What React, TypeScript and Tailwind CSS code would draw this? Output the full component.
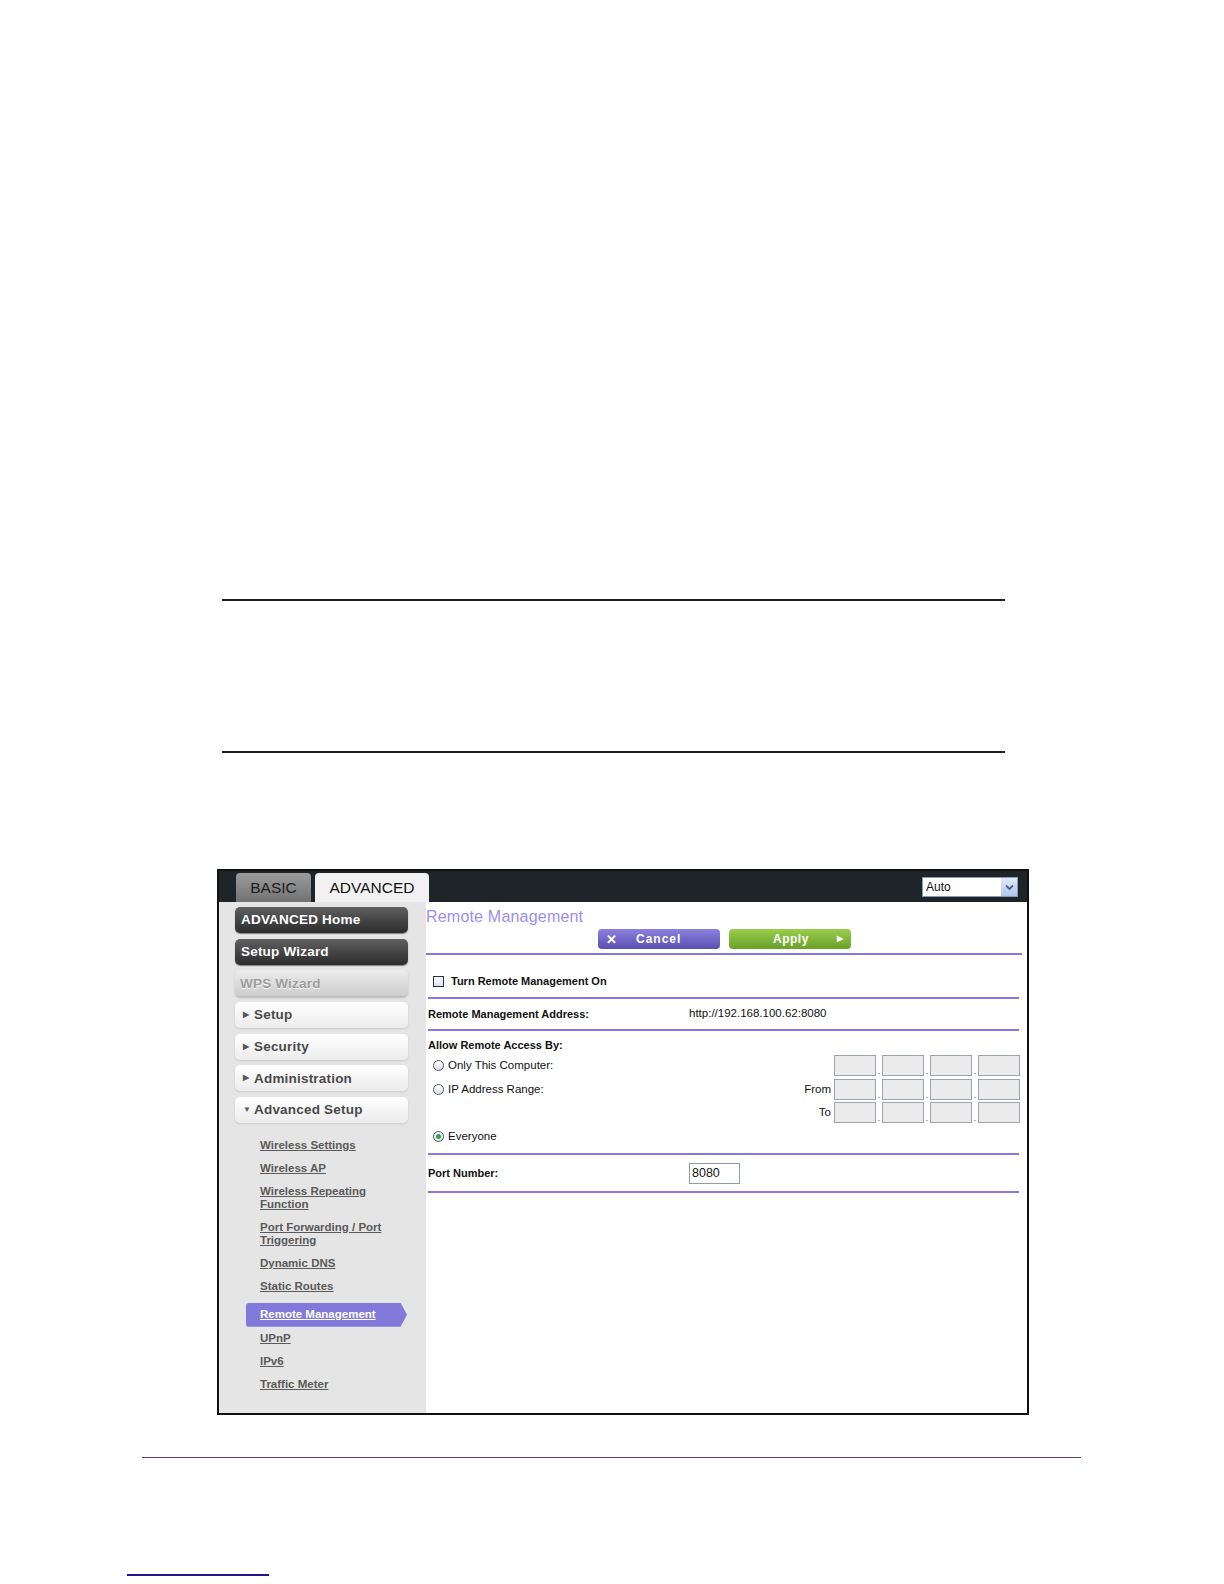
import React from 'react';

const sans = "font-['Liberation_Sans',Arial,Helvetica,sans-serif]";

// Sidebar menu buttons
const NavButton = ({ label, kind, arrow }: { label: string; kind: 'dark' | 'disabled' | 'light'; arrow?: 'right' | 'down' }) => {
    const look =
        kind === 'dark'
            ? 'bg-linear-to-b from-[#616161] to-[#2c2c2c] text-white shadow-[0_1px_1px_rgba(0,0,0,0.45)] pl-[6px]'
            : kind === 'disabled'
              ? 'bg-linear-to-b from-[#ececec] to-[#cdcdcd] text-[#9c9c9c] shadow-[0_2px_2px_rgba(0,0,0,0.18)] pl-[5px] [text-shadow:0_1px_0_#fff]'
              : 'bg-linear-to-b from-[#ffffff] to-[#ececec] text-[#4a4a4a] shadow-[0_1px_2px_rgba(0,0,0,0.12)] pl-[8px]';
    return (
        <div className={`h-[26px] w-[173px] rounded-[5px] flex items-center text-[13.5px] font-bold tracking-[0.2px] ${look}`}>
            {arrow && <span className="w-[11px] text-[8px] text-[#5a5a5a] leading-none">{arrow === 'right' ? '▶' : '▼'}</span>}
            <span className="leading-none">{label}</span>
        </div>
    );
};

const SubLink = ({ lines }: { lines: string[] }) => (
    <div className="pl-[41px] flex flex-col">
        {lines.map((l) => (
            <span key={l} className="text-[11.5px] leading-[13px] font-bold text-[#5a5a5a] underline">
                {l}
            </span>
        ))}
    </div>
);

const Radio = ({ checked }: { checked?: boolean }) => (
    <span className="w-[11px] h-[11px] rounded-full border border-[#4b5a70] bg-linear-to-b from-[#ffffff] to-[#dde2ea] flex items-center justify-center shrink-0">
        {checked && <span className="w-[5px] h-[5px] rounded-full bg-[#2fa63a]" />}
    </span>
);

const IpBoxes = () => (
    <div className="flex items-end">
        {[0, 1, 2, 3].map((i) => (
            <React.Fragment key={i}>
                {i > 0 && <span className="w-[6px] text-[9px] leading-[10px] text-[#555] text-center">.</span>}
                <span className="w-[42px] h-[21px] bg-[#ebebeb] border border-[#9aa4b4]" />
            </React.Fragment>
        ))}
    </div>
);

const Rule = ({ wide }: { wide?: boolean }) => <div className={`h-[2px] bg-[#8479e1] ${wide ? 'mr-[5px]' : 'ml-[2px] mr-[8px]'}`} />;

const App = () => {
    const links: string[][] = [
        ['Wireless Settings'],
        ['Wireless AP'],
        ['Wireless Repeating', 'Function'],
        ['Port Forwarding / Port', 'Triggering'],
        ['Dynamic DNS'],
        ['Static Routes'],
    ];

    return (
        <div className={`w-[1224px] h-[1584px] bg-white flex flex-col ${sans}`}>
            {/* note box rules */}
            <div className="mt-[599px] ml-[222px] w-[783px] h-[2px] bg-[#231f20]" />
            <div className="mt-[150px] ml-[222px] w-[783px] h-[2px] bg-[#231f20]" />

            {/* router screenshot */}
            <div className="mt-[116px] ml-[217px] w-[812px] h-[546px] border-2 border-[#111] flex flex-col">
                {/* top bar */}
                <div className="h-[31px] bg-[#1e2427] flex items-end pl-[17px] pr-[9px]">
                    <div className="w-[75px] h-[29px] rounded-t-[4px] bg-linear-to-b from-[#9c9c9c] to-[#727272] flex items-center justify-center text-[15.5px] text-[#1c1c1c]">
                        BASIC
                    </div>
                    <div className="ml-[4px] w-[114px] h-[29px] rounded-t-[4px] bg-[#f1f1f1] flex items-center justify-center text-[15.5px] text-[#111]">
                        ADVANCED
                    </div>
                    <div className="ml-auto mb-[5px] w-[96px] h-[20px] border border-[#7f9db9] bg-white flex items-center">
                        <span className="flex-1 pl-[3px] text-[12px] text-[#111]">Auto</span>
                        <span className="w-[16px] h-full bg-linear-to-b from-[#dfe9fb] to-[#b2c7ee] flex items-center justify-center">
                            <svg width="9" height="7" viewBox="0 0 9 7">
                                <path d="M1 1.5 L4.5 5 L8 1.5" fill="none" stroke="#4d6185" strokeWidth="1.8" />
                            </svg>
                        </span>
                    </div>
                </div>

                <div className="flex flex-1">
                    {/* sidebar */}
                    <div className="w-[207px] bg-[#e5e5e5] flex flex-col pt-[5px]">
                        <div className="pl-[16px] flex flex-col gap-[5.7px]">
                            <NavButton label="ADVANCED Home" kind="dark" />
                            <NavButton label="Setup Wizard" kind="dark" />
                            <NavButton label="WPS Wizard" kind="disabled" />
                            <NavButton label="Setup" kind="light" arrow="right" />
                            <NavButton label="Security" kind="light" arrow="right" />
                            <NavButton label="Administration" kind="light" arrow="right" />
                            <NavButton label="Advanced Setup" kind="light" arrow="down" />
                        </div>
                        <div className="mt-[15.5px] flex flex-col gap-[10px]">
                            {links.map((l) => (
                                <SubLink key={l[0]} lines={l} />
                            ))}
                            <div className="ml-[27px] w-[161px] py-[5.5px] pl-[14px] rounded-l-[3px] bg-[#8079d9] [clip-path:polygon(0_0,96%_0,100%_50%,96%_100%,0_100%)]">
                                <span className="text-[11.5px] leading-[13px] font-bold text-white underline block">Remote Management</span>
                            </div>
                            <div className="-mt-[4.5px]">
                                <SubLink lines={['UPnP']} />
                            </div>
                            <SubLink lines={['IPv6']} />
                            <SubLink lines={['Traffic Meter']} />
                        </div>
                    </div>

                    {/* content */}
                    <div className="flex-1 bg-white flex flex-col pt-[6px]">
                        <div className="text-[16px] leading-[18px] tracking-[0.2px] text-[#9b90f0]">Remote Management</div>
                        <div className="mt-[3px] flex justify-center gap-[9px] pr-[4px]">
                            <div className="w-[122px] h-[20px] rounded-[4px] bg-linear-to-b from-[#8c81de] to-[#5a4fb2] flex items-center text-white font-bold text-[12px]">
                                <span className="w-[38px] pl-[8px] text-[13px] leading-none">✕</span>
                                <span className="tracking-[1px]">Cancel</span>
                            </div>
                            <div className="w-[122px] h-[20px] rounded-[4px] bg-linear-to-b from-[#9bcd4c] to-[#6aa128] flex items-center text-white font-bold text-[12px]">
                                <span className="w-[44px]" />
                                <span className="tracking-[0.5px]">Apply</span>
                                <span className="ml-auto pr-[8px] text-[8px]">▶</span>
                            </div>
                        </div>
                        <div className="mt-[4px]">
                            <Rule wide />
                        </div>

                        {/* turn on */}
                        <div className="h-[42px] pl-[7px] pt-[19px]">
                            <div className="h-[14px] flex items-center">
                                <span className="w-[11px] h-[11px] border border-[#23324a] bg-linear-to-b from-[#ffffff] to-[#dce1e9]" />
                                <span className="ml-[7px] text-[11px] font-bold text-[#111]">Turn Remote Management On</span>
                            </div>
                        </div>
                        <Rule />

                        {/* address */}
                        <div className="h-[30px] pl-[2px] flex items-center text-[11px] text-[#111]">
                            <span className="w-[261px] font-bold">Remote Management Address:</span>
                            <span className="text-[11.5px]">http://192.168.100.62:8080</span>
                        </div>
                        <Rule />

                        {/* access */}
                        <div className="h-[122px] pl-[2px] pr-[7px] pt-[7px] flex flex-col text-[11.5px] text-[#111]">
                            <div className="h-[14px] leading-[14px] text-[11px] font-bold">Allow Remote Access By:</div>
                            <div className="mt-[2px] h-[23.5px] flex items-center">
                                <span className="flex-1 flex items-center pl-[5px] gap-[4px]">
                                    <Radio />
                                    Only This Computer:
                                </span>
                                <IpBoxes />
                            </div>
                            <div className="h-[23.5px] flex items-center">
                                <span className="flex-1 flex items-center pl-[5px] gap-[4px]">
                                    <Radio />
                                    IP Address Range:
                                </span>
                                <span className="mr-[3px]">From</span>
                                <IpBoxes />
                            </div>
                            <div className="h-[23.5px] flex items-center">
                                <span className="flex-1" />
                                <span className="mr-[3px]">To</span>
                                <IpBoxes />
                            </div>
                            <div className="h-[23.5px] flex items-center pl-[5px] gap-[4px]">
                                <Radio checked />
                                Everyone
                            </div>
                        </div>
                        <Rule />

                        {/* port */}
                        <div className="h-[36px] pl-[2px] flex items-center text-[11px] text-[#111]">
                            <span className="w-[261px] font-bold">Port Number:</span>
                            <span className="w-[51px] h-[21px] border border-[#8a9bb3] bg-white flex items-center pl-[2px] text-[12.5px]">8080</span>
                        </div>
                        <Rule />
                    </div>
                </div>
            </div>

            {/* footer rules */}
            <div className="mt-[42px] ml-[142px] w-[939px] h-px bg-[#5e3d84]" />
            <div className="mt-[116px] ml-[127px] w-[142px] h-[1.5px] bg-[#1a1a8c]" />
        </div>
    );
};

export default App;
